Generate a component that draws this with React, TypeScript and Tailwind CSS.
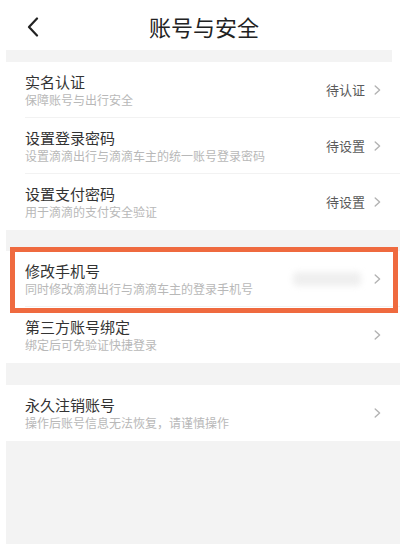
import React from "react";

type Row = {
  title: string;
  sub: string;
  right?: string;
  blurred?: boolean;
};

const Chevron = () => (
  <svg width="7" height="10" viewBox="0 0 7 10" className="shrink-0">
    <path d="M1.2 1 L5.6 5 L1.2 9" fill="none" stroke="#b3b3b3" strokeWidth="1.4" strokeLinecap="round" strokeLinejoin="round" />
  </svg>
);

function RowItem({ row, last }: { row: Row; last?: boolean }) {
  return (
    <div className="relative flex h-[56px] items-center bg-white pl-[25px] pr-[19px]">
      <div className="flex flex-1 flex-col">
        <div className="text-[15px] leading-[18px] text-[#333333]">{row.title}</div>
        <div className="mt-[1px] text-[12px] leading-[16px] text-[#b8b8b8]">{row.sub}</div>
      </div>
      {row.right && (
        <div className="mr-[9px] text-[13px] leading-[16px] text-[#5a5a5a]">{row.right}</div>
      )}
      {row.blurred && (
        <div className="mr-[13px] h-[14px] w-[68px] rounded-sm bg-[#efefef] blur-[3px]" />
      )}
      <Chevron />
      {!last && <div className="absolute bottom-0 left-[25px] right-0 h-px bg-[#f2f2f2]" />}
    </div>
  );
}

export default function App() {
  const group1: Row[] = [
    { title: "实名认证", sub: "保障账号与出行安全", right: "待认证" },
    { title: "设置登录密码", sub: "设置滴滴出行与滴滴车主的统一账号登录密码", right: "待设置" },
    { title: "设置支付密码", sub: "用于滴滴的支付安全验证", right: "待设置" },
  ];
  const group2: Row[] = [
    { title: "修改手机号", sub: "同时修改滴滴出行与滴滴车主的登录手机号", blurred: true },
    { title: "第三方账号绑定", sub: "绑定后可免验证快捷登录" },
  ];
  const group3: Row[] = [{ title: "永久注销账号", sub: "操作后账号信息无法恢复，请谨慎操作" }];

  return (
    <div
      className="relative flex h-[544px] w-[400px] flex-col overflow-hidden bg-white"
      style={{ fontFamily: '"Noto Sans CJK SC", "Noto Sans", sans-serif' }}
    >
      {/* Header */}
      <div className="relative flex h-[50px] items-center justify-center">
        <svg width="12" height="20" viewBox="0 0 12 20" className="absolute left-[27px] top-[17px]">
          <path d="M10 1.5 L2 10 L10 18.5" fill="none" stroke="#222222" strokeWidth="2.2" strokeLinecap="round" strokeLinejoin="round" />
        </svg>
        <div className="pl-[8px] pt-[2px] text-[22px] leading-[28px] text-[#222222]">账号与安全</div>
      </div>

      <div className="ml-[6px] mr-[8px] h-[12px] bg-[#f3f3f3]" />
      <div className="flex flex-col">
        {group1.map((r, i) => (
          <RowItem key={r.title} row={r} last={i === group1.length - 1} />
        ))}
      </div>

      <div className="ml-[6px] h-[21px] bg-[#f3f3f3]" />
      <div className="relative flex flex-col">
        {group2.map((r, i) => (
          <RowItem key={r.title} row={r} last={i === group2.length - 1} />
        ))}
        <div className="pointer-events-none absolute left-[10px] right-[2px] top-[-4px] h-[66px] border-[5px] border-[#ef6a3f]" />
      </div>

      <div className="ml-[6px] h-[22px] bg-[#f3f3f3]" />
      <div className="flex flex-col">
        {group3.map((r) => (
          <RowItem key={r.title} row={r} last />
        ))}
      </div>

      <div className="ml-[6px] flex-1 bg-[#f3f3f3]" />
    </div>
  );
}
